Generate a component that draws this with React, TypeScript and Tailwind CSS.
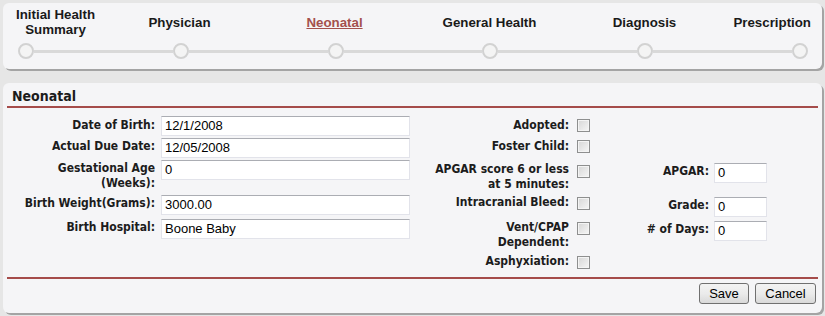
import React from 'react';

const STEPS = [
  { label: 'Initial Health', label2: 'Summary', active: false, align: 'justify-start pl-[13px] text-center' },
  { label: 'Physician', active: false, align: 'justify-center' },
  { label: 'Neonatal', active: true, align: 'justify-center' },
  { label: 'General Health', active: false, align: 'justify-center' },
  { label: 'Diagnosis', active: false, align: 'justify-center' },
  { label: 'Prescription', active: false, align: 'justify-end pr-[11px]' },
];

const lbl = "font-['DejaVu_Sans_Condensed','DejaVu_Sans',sans-serif] font-bold text-[12px] leading-[15px] text-[#1c1c1c] text-right";

function TextBox({ value, w, mt }: { value: string; w: string; mt: string }) {
  return (
    <div
      className={`${w} ${mt} h-[20px] border border-[#e2e3ea] border-t-[#abadb3] bg-white pl-[3px] font-['Liberation_Sans',Arial,sans-serif] text-[13px] leading-[18px] text-black`}
    >
      {value}
    </div>
  );
}

function Check({ mt }: { mt: string }) {
  return (
    <span className={`${mt} ml-[8px] block w-[13px] h-[13px] border border-[#8e8f8f] bg-gradient-to-br from-[#d6d6d6] to-[#f6f6f6] shadow-[inset_0_0_0_1px_#f4f4f4]`} />
  );
}

function Btn({ children, w }: { children: React.ReactNode; w: string }) {
  return (
    <button
      className={`${w} h-[21px] rounded-[3px] border border-[#707070] bg-gradient-to-b from-[#f3f3f3] via-[#ebebeb] to-[#d9d9d9] font-['Liberation_Sans',Arial,sans-serif] text-[13px] leading-[18px] text-black`}
    >
      {children}
    </button>
  );
}

export default function App() {
  return (
    <div className="w-[825px] h-[316px] bg-[#e6e6e6] pt-[3px] px-[3px]">
      {/* wizard steps */}
      <div className="w-[819px] h-[66px] rounded-[6px] bg-[#f5f5f7] shadow-[2px_2px_0_#a4a4a4] pt-[4px]">
        <div className="grid grid-cols-[99px_155px_155px_155px_155px_100px] h-[30px]">
          {STEPS.map((s) => (
            <div key={s.label} className={`flex items-center ${s.align}`}>
              <span
                className={`font-['Liberation_Sans',Arial,sans-serif] font-bold text-[13.3px] leading-[15px] text-center ${
                  s.active ? 'text-[#a4504c] underline' : 'text-[#1a1a1a]'
                }`}
              >
                {s.label}
                {s.label2 && <br />}
                {s.label2}
              </span>
            </div>
          ))}
        </div>
        <div className="mt-[6px] flex items-center pl-[15px] pr-[14px]">
          {STEPS.map((s, i) => (
            <React.Fragment key={s.label}>
              {i > 0 && <div className="flex-1 h-[3px] bg-[#d9d9d9]" />}
              <div className="w-[16px] h-[16px] rounded-full border-2 border-[#d2d2d2] bg-[#f4f4f4]" />
            </React.Fragment>
          ))}
        </div>
      </div>

      {/* neonatal form */}
      <div className="mt-[14px] w-[819px] h-[230px] rounded-[6px] bg-[#f5f5f7] shadow-[2px_2px_0_#a4a4a4] pt-[5px]">
        <div className="mx-[4px] pl-[5px] pb-[1px] border-b-2 border-[#a54c4a]">
          <h2 className="font-['DejaVu_Sans_Condensed','DejaVu_Sans',sans-serif] font-bold text-[14px] leading-[17px] text-[#1c1c1c]">
            Neonatal
          </h2>
        </div>

        <div className="mt-[8px] grid grid-cols-[152px_255px_159px_21px_119px_58px] grid-rows-[21px_21px_35px_24px_34px_20px] items-start">
          {/* row 1 */}
          <div className={`${lbl} mt-[2px]`}>Date of Birth:</div>
          <div className="pl-[6px]"><TextBox value="12/1/2008" w="w-[249px]" mt="mt-0" /></div>
          <div className={`${lbl} mt-[2px]`}>Adopted:</div>
          <Check mt="mt-[3px]" />
          <div />
          <div />

          {/* row 2 */}
          <div className={`${lbl} mt-[2px]`}>Actual Due Date:</div>
          <div className="pl-[6px]"><TextBox value="12/05/2008" w="w-[249px]" mt="mt-[1px]" /></div>
          <div className={`${lbl} mt-[2px]`}>Foster Child:</div>
          <Check mt="mt-[3px]" />
          <div />
          <div />

          {/* row 3 */}
          <div className={`${lbl} mt-[3px]`}>Gestational Age<br />(Weeks):</div>
          <div className="pl-[6px]"><TextBox value="0" w="w-[249px]" mt="mt-[2px]" /></div>
          <div className={`${lbl} mt-[4px]`}>APGAR score 6 or less<br />at 5 minutes:</div>
          <Check mt="mt-[7px]" />
          <div className={`${lbl} mt-[6px]`}>APGAR:</div>
          <div className="pl-[5px]"><TextBox value="0" w="w-[53px]" mt="mt-[5px]" /></div>

          {/* row 4 */}
          <div className={`${lbl} mt-[3px]`}>Birth Weight(Grams):</div>
          <div className="pl-[6px]"><TextBox value="3000.00" w="w-[249px]" mt="mt-[2px]" /></div>
          <div className={`${lbl} mt-[2px]`}>Intracranial Bleed:</div>
          <Check mt="mt-[4px]" />
          <div className={`${lbl} mt-[5px]`}>Grade:</div>
          <div className="pl-[5px]"><TextBox value="0" w="w-[53px]" mt="mt-[4px]" /></div>

          {/* row 5 */}
          <div className={`${lbl} mt-[3px]`}>Birth Hospital:</div>
          <div className="pl-[6px]"><TextBox value="Boone Baby" w="w-[249px]" mt="mt-[2px]" /></div>
          <div className={`${lbl} mt-[3px]`}>Vent/CPAP<br />Dependent:</div>
          <Check mt="mt-[5px]" />
          <div className={`${lbl} mt-[5px]`}># of Days:</div>
          <div className="pl-[5px]"><TextBox value="0" w="w-[53px]" mt="mt-[4px]" /></div>

          {/* row 6 */}
          <div />
          <div />
          <div className={`${lbl} mt-[3px]`}>Asphyxiation:</div>
          <Check mt="mt-[5px]" />
          <div />
          <div />
        </div>

        <div className="mt-[6px] mx-[4px] border-b-2 border-[#a54c4a]" />
        <div className="mt-[4px] flex justify-end gap-[6px] pr-[6px]">
          <Btn w="w-[50px]">Save</Btn>
          <Btn w="w-[61px]">Cancel</Btn>
        </div>
      </div>
    </div>
  );
}
